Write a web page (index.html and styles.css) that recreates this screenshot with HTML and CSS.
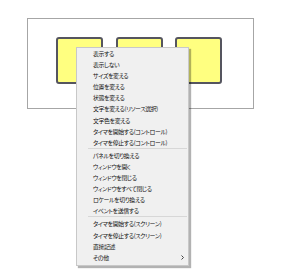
FILE: index.html
```html
<!DOCTYPE html>
<html lang="ja">
<head>
<meta charset="utf-8">
<link rel="stylesheet" href="styles.css">
</head>
<body>
<div class="stage">
  <div class="panel">
    <div class="boxes">
      <div class="box"></div>
      <div class="box"></div>
      <div class="box"></div>
    </div>
  </div>
  <ul class="menu">
    <li class="item">表示する</li>
    <li class="item">表示しない</li>
    <li class="item">サイズを変える</li>
    <li class="item">位置を変える</li>
    <li class="item">状態を変える</li>
    <li class="item">文字を変える(リソース選択)</li>
    <li class="item">文字色を変える</li>
    <li class="item">タイマを開始する(コントロール)</li>
    <li class="item">タイマを停止する(コントロール)</li>
    <li class="sep"></li>
    <li class="item">パネルを切り換える</li>
    <li class="item">ウィンドウを開く</li>
    <li class="item">ウィンドウを閉じる</li>
    <li class="item">ウィンドウをすべて閉じる</li>
    <li class="item">ロケールを切り換える</li>
    <li class="item">イベントを送信する</li>
    <li class="sep"></li>
    <li class="item">タイマを開始する(スクリーン)</li>
    <li class="item">タイマを停止する(スクリーン)</li>
    <li class="item">直接記述</li>
    <li class="item sub">その他<svg class="arrow" width="3" height="5" viewBox="0 0 3 5"><path d="M0.5 0.5 L2.5 2.5 L0.5 4.5" fill="none" stroke="#444" stroke-width="1"/></svg></li>
  </ul>
</div>
</body>
</html>
```
FILE: styles.css
```css
html, body {
  margin: 0;
  padding: 0;
  background: #ffffff;
}
.stage {
  position: relative;
  width: 306px;
  height: 269px;
  padding: 18px 0 0 27px;
  box-sizing: border-box;
}
.panel {
  width: 227px;
  height: 91px;
  border: 1px solid #a6a6a6;
  box-sizing: border-box;
  background: #ffffff;
  padding: 18px 0 0 28px;
}
.boxes {
  display: flex;
  gap: 12.5px;
}
.box {
  width: 47px;
  height: 47px;
  box-sizing: border-box;
  background: #ffff80;
  border: 2px solid #55555f;
  border-radius: 3px;
}
.menu {
  position: absolute;
  left: 76px;
  top: 47px;
  width: 113px;
  margin: 0;
  padding: 0 0 2px 0;
  list-style: none;
  box-sizing: border-box;
  background: #f0f0f0;
  border: 1px solid #c8c8c8;
  box-shadow: 2px 2px 1px rgba(0, 0, 0, 0.3);
  font-family: "Noto Sans CJK JP", sans-serif;
  font-size: 5.9px;
  letter-spacing: -0.35px;
  font-feature-settings: "palt";
  color: #111;
}
.item {
  height: 11.1px;
  line-height: 11.1px;
  padding-left: 16px;
  white-space: nowrap;
  position: relative;
}
.sep {
  height: 2px;
  margin-left: 11px;
  margin-right: 1px;
  border-top: 1px solid #d7d7d7;
  box-sizing: border-box;
}
.sub .arrow {
  position: absolute;
  left: 104px;
  top: 3.5px;
}
```
